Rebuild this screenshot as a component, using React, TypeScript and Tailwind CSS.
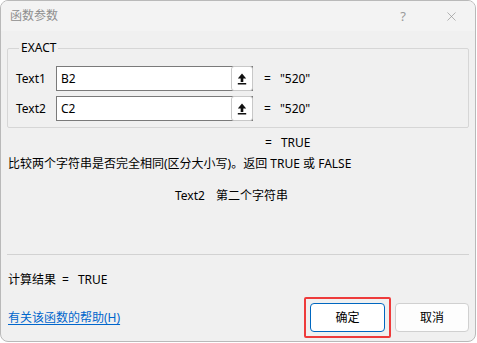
import { X } from "lucide-react";

function PickIcon() {
  return (
    <svg width="10" height="12" viewBox="0 0 10 12">
      <path d="M5 0.5 L9.2 5.5 H6.3 V9 H3.7 V5.5 H0.8 Z" fill="#111" />
      <rect x="0.8" y="10" width="8.4" height="1.5" fill="#111" />
    </svg>
  );
}

function ArgRow({ label, value, result }: { label: string; value: string; result: string }) {
  return (
    <div className="flex h-[25px] items-center">
      <span className="w-[40px]">{label}</span>
      <div className="flex h-[25px] w-[197px] items-stretch border border-[#7a7a7a] bg-white">
        <span className="flex flex-1 items-center pl-[4px]">{value}</span>
        <button className="-my-px -mr-px flex w-[22px] items-center justify-center rounded-[3px] border border-[#c8c8c8] bg-white">
          <PickIcon />
        </button>
      </div>
      <span className="ml-[11px]">=</span>
      <span className="ml-[9px]">{result}</span>
    </div>
  );
}

export default function App() {
  return (
    <div
      className="h-[343px] w-[477px] bg-white text-[12px] leading-[16px] text-black"
      style={{ fontFamily: '"Noto Sans", "Noto Sans CJK SC", sans-serif' }}
    >
      <div className="flex h-[342px] w-[476px] flex-col overflow-hidden rounded-[8px] border border-[#b9b9b9] bg-[#f0f0f0]">
        <div className="flex h-[30px] shrink-0 items-center bg-[#f3f3f3] pl-[9px] pr-[16px] text-[#8e8e8e]">
          <span className="flex-1">函数参数</span>
          <span className="mr-[38px] text-[13px] text-[#9a9a9a]">?</span>
          <X size={15} strokeWidth={1} color="#8a8a8a" />
        </div>

        <div className="flex flex-1 flex-col px-[6px]">
          <fieldset className="mt-[9px] rounded-[2px] border border-[#d6d6d6] pt-[10px] pb-[6px] pl-[8px]">
            <legend className="ml-[3px] px-[2px] leading-[16px]">EXACT</legend>
            <div className="flex flex-col gap-[5px]">
              <ArgRow label="Text1" value="B2" result={'"520"'} />
              <ArgRow label="Text2" value="C2" result={'"520"'} />
            </div>
          </fieldset>

          <div className="mt-[7px] pl-[258px]">
            <span>=</span>
            <span className="ml-[9px]">TRUE</span>
          </div>

          <div className="mt-[5px] pl-px">比较两个字符串是否完全相同(区分大小写)。返回 TRUE 或 FALSE</div>

          <div className="mt-[16px] pl-[168px]">
            <span>Text2</span>
            <span className="ml-[11px]">第二个字符串</span>
          </div>

          <div className="mt-[50px] h-px bg-[#d2d2d2]" />

          <div className="mt-[17px] pl-px">
            <span>计算结果</span>
            <span className="ml-[6px]">=</span>
            <span className="ml-[9px]">TRUE</span>
          </div>

          <div className="mt-[15px] flex items-center">
            <a className="flex-1 pl-px text-[#0066cc] underline underline-offset-2">有关该函数的帮助(H)</a>
            <div className="relative">
              <button className="h-[29px] w-[75px] rounded-[4px] border border-[#0067c0] bg-white">确定</button>
              <div className="pointer-events-none absolute -inset-[6px] rounded-[2px] border-2 border-[#ee3b3b]" />
            </div>
            <button className="ml-[10px] h-[29px] w-[74px] rounded-[4px] border border-[#d0d0d0] bg-[#fdfdfd]">取消</button>
          </div>
        </div>
      </div>
    </div>
  );
}
